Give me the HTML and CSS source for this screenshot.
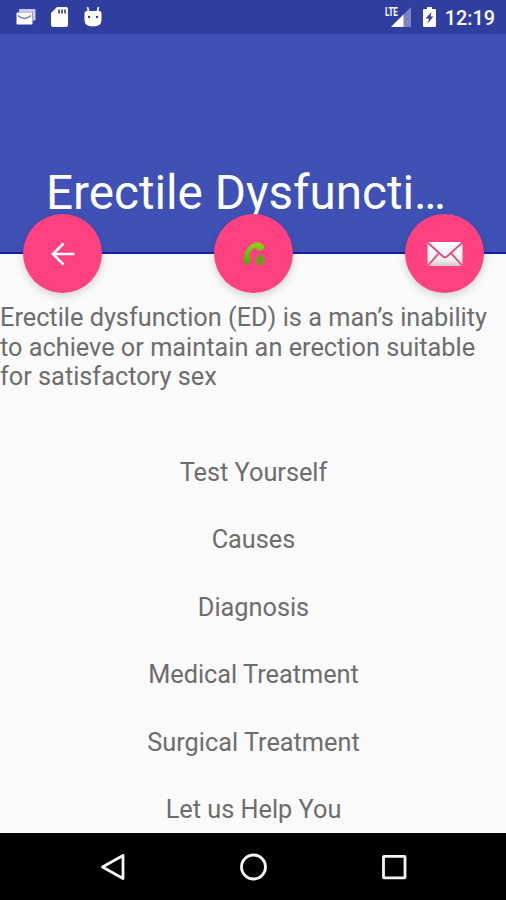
FILE: index.html
```html
<!DOCTYPE html>
<html lang="en">
<head>
    <meta charset="UTF-8">
    <title>Erectile Dysfunction</title>
    <link rel="stylesheet" href="styles.css">
</head>
<body>
    <div class="screen">
        <div class="status-bar">
            <div class="notifications">
                <svg width="20" height="16" viewBox="0 0 20 16">
                    <path d="M4 0h14.500q1 0 1 1v9.500q0 1-1 1h-1.500v-8H3V1q0-1 1-1z" fill="#c5cae9"/>
                    <rect x="0.500" y="3.500" width="16" height="12" rx="1" fill="#fff"/>
                    <path d="M2 6.500q6.500 6 13 0" fill="none" stroke="#6873b8" stroke-width="1.300"/>
                </svg>
                <svg class="sd-icon" width="17" height="20" viewBox="0 0 17 20">
                    <path d="M6 0h9q2 0 2 2v16q0 2-2 2H2q-2 0-2-2V6z" fill="#fff"/>
                    <path d="M8 2.500v4M11 2.500v4M14 2.500v4" stroke="#303f9f" stroke-width="1.600"/>
                </svg>
                <svg width="18" height="20" viewBox="0 0 18 20">
                    <path d="M3.500 0l1.200 5M14.500 0l-1.200 5" stroke="#fff" stroke-width="1.700"/>
                    <path d="M0.500 6Q0.500 4 3 4h12q2.500 0 2.500 2v7q0 6.500-8.500 6.500t-8.500-6.500z" fill="#fff"/>
                    <circle cx="5" cy="10" r="1.200" fill="#303f9f"/>
                    <circle cx="13" cy="10" r="1.200" fill="#303f9f"/>
                </svg>
            </div>
            <div class="system">
                <div class="signal">
                    <span class="network">LTE</span>
                    <svg width="20" height="20" viewBox="0 0 20 20">
                        <path d="M20 0v20H0z" fill="#7b85c4"/>
                        <path d="M12.500 7.500V20H0z" fill="#fff"/>
                    </svg>
                </div>
                <svg class="battery" width="13" height="20" viewBox="0 0 13 20">
                    <path d="M4 0h5v2h3q1 0 1 1v16q0 1-1 1H1q-1 0-1-1V3q0-1 1-1h3z" fill="#fff"/>
                    <path d="M8.500 5L2.500 11.500H6L4.500 16.500l6-7H7.500z" fill="#303f9f"/>
                </svg>
                <span class="clock">12:19</span>
            </div>
        </div>

        <div class="app-bar">
            <h1 class="title">Erectile Dysfuncti…</h1>
        </div>

        <div class="actions">
            <button class="fab" title="Back">
                <svg width="24" height="24" viewBox="0 0 24 24">
                    <path d="M12.500 1.500L2 12l10.500 10.500M2 12H23.500" fill="none" stroke="#fff" stroke-width="2.600"/>
                </svg>
            </button>
            <button class="fab" title="Call">
                <svg width="22" height="23" viewBox="0 0 22 23">
                    <defs>
                        <linearGradient id="phone" x1="0" y1="0" x2="0" y2="1">
                            <stop offset="0" stop-color="#86dc0c"/>
                            <stop offset="1" stop-color="#52a706"/>
                        </linearGradient>
                    </defs>
                    <path d="M0.500 17C0.500 10 7 1.500 13.500 0.500q6-0.500 7.500 4.500 0.500 2.500-1.500 3l-4 0.800q-1.500-0.300-2.200-3.300C9.500 6.500 6 11 5.800 14.500q2.200 0.500 1.900 2.500l-1 4.200q-1 1.500-3.500 1.300Q0.500 22 0.500 17z" fill="url(#phone)"/>
                    <path d="M13 15.500l4.500-3.500 4 3.500v7h-8.500z" fill="#6da017"/>
                    <path d="M15.500 17h3.500v3h-3.500z" fill="#8a8433"/>
                </svg>
            </button>
            <button class="fab" title="Email">
                <svg width="36" height="26" viewBox="0 0 36 26">
                    <defs>
                        <linearGradient id="mail" x1="0" y1="0" x2="0" y2="1">
                            <stop offset="0" stop-color="#fff"/>
                            <stop offset="0.750" stop-color="#f1eff0"/>
                            <stop offset="1" stop-color="#cfc8ca"/>
                        </linearGradient>
                    </defs>
                    <rect x="0.500" y="1" width="35" height="24" rx="1" fill="url(#mail)"/>
                    <path d="M0.500 1.500L16 15.500q2 1.500 4 0L35.500 1.500M1 24.500L12 12M35 24.500L24 12" fill="none" stroke="#e8467b" stroke-width="1.800"/>
                </svg>
            </button>
        </div>

        <div class="content">
            <p class="description">Erectile dysfunction (ED) is a man’s inability<br>to achieve or maintain an erection suitable<br>for satisfactory sex</p>
            <ul class="menu">
                <li class="menu-item">Test Yourself</li>
                <li class="menu-item">Causes</li>
                <li class="menu-item">Diagnosis</li>
                <li class="menu-item">Medical Treatment</li>
                <li class="menu-item">Surgical Treatment</li>
                <li class="menu-item">Let us Help You</li>
            </ul>
        </div>

        <div class="nav-bar">
            <svg width="28" height="30" viewBox="0 0 28 30">
                <path d="M24 3.500v23L3.500 15z" fill="none" stroke="#f5f5f5" stroke-width="2.800" stroke-linejoin="round"/>
            </svg>
            <svg width="28" height="30" viewBox="0 0 28 30">
                <circle cx="13.500" cy="15" r="12" fill="none" stroke="#f5f5f5" stroke-width="2.800"/>
            </svg>
            <svg width="28" height="30" viewBox="0 0 28 30">
                <rect x="3.500" y="4.300" width="21.500" height="21.500" rx="0.500" fill="none" stroke="#f5f5f5" stroke-width="2.800"/>
            </svg>
        </div>
    </div>
</body>
</html>
```
FILE: styles.css
```css
* {
    box-sizing: border-box;
}

body {
    margin: 0;
    font-family: Roboto, sans-serif;
    background: #fafafa;
    color: #6d6d6d;
}

svg {
    display: block;
    flex-shrink: 0;
}

.screen {
    display: flex;
    flex-direction: column;
    width: 506px;
    height: 900px;
    overflow: hidden;
}

.status-bar {
    display: flex;
    justify-content: space-between;
    height: 34px;
    padding: 0 11px 0 16px;
    background: #303f9f;
    color: #fff;
}

.notifications,
.system {
    display: flex;
    align-items: center;
}

.notifications {
    gap: 15px;
    padding-bottom: 1px;
}

.sd-icon {
    margin-right: 1px;
}

.signal {
    display: flex;
    align-items: flex-start;
    height: 20px;
}

.network {
    width: 14px;
    margin-right: -8px;
    font-size: 12px;
    font-weight: 700;
    line-height: 10px;
    transform: scaleX(0.66);
    transform-origin: left;
    z-index: 1;
}

.battery {
    margin: 0 9px 0 12px;
}

.clock {
    margin-top: 2px;
    font-size: 19.8px;
    font-weight: 500;
}

.app-bar {
    display: flex;
    align-items: flex-end;
    height: 220px;
    padding: 0 0 31px 46px;
    background: #3f51b5;
    border-bottom: 2px solid #1420a6;
}

.title {
    margin: 0;
    color: #fff;
    font-size: 47.6px;
    font-weight: 400;
    line-height: 56px;
    white-space: nowrap;
}

/* buttons straddle the bottom edge of the app bar */
.actions {
    display: flex;
    justify-content: space-between;
    margin-top: -40px;
    padding: 0 22px 0 23px;
    z-index: 1;
}

.fab {
    display: flex;
    align-items: center;
    justify-content: center;
    width: 79px;
    height: 79px;
    padding: 0;
    border: none;
    border-radius: 50%;
    background: #ff4081;
    box-shadow: 0 3px 8px rgba(0, 0, 0, 0.16);
}

.content {
    flex: 1;
    min-height: 0;
    padding-top: 10px;
    overflow: hidden;
    font-size: 25.3px;
}

.description {
    margin: 0;
    line-height: 29.7px;
    white-space: nowrap;
}

.menu {
    margin: 46.5px 0 0;
    padding: 0 0 0 1px;
    list-style: none;
}

.menu-item {
    height: 67.5px;
    line-height: 67.5px;
    text-align: center;
}

.nav-bar {
    display: flex;
    justify-content: space-between;
    align-items: center;
    height: 67px;
    padding: 0 98px 0 99px;
    background: #000;
}
```
